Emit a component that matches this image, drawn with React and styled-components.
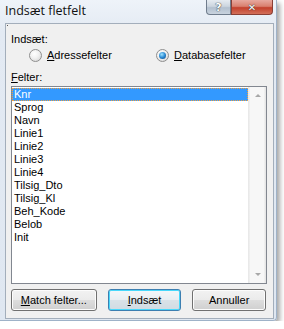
import React from 'react';
import styled, { createGlobalStyle } from 'styled-components';

/*--------------------------
    Global
--------------------------*/
const Global = createGlobalStyle`
    html, body {
        margin: 0;
        padding: 0;
        background: #ffffff;
    }
    body {
        font-family: "Liberation Sans", Arial, sans-serif;
        font-size: 11px;
        color: #000;
    }
`;

/*--------------------------
    Data
--------------------------*/
const FIELDS = [
    'Knr', 'Sprog', 'Navn', 'Linie1', 'Linie2', 'Linie3', 'Linie4',
    'Tilsig_Dto', 'Tilsig_Kl', 'Beh_Kode', 'Belob', 'Init',
];

/*--------------------------
    Styled
--------------------------*/
const Window = styled.div`
    width: 277px;
    height: 321px;
    box-sizing: border-box;
    display: flex;
    flex-direction: column;
    background: linear-gradient(180deg, #eef3f9 0%, #e3eaf3 10%, #dfe7f1 100%);
    border: 1px solid #9fb2c8;
    border-top: none;
    border-left: none;
    border-radius: 0 0 4px 0;
    box-shadow: 3px 3px 5px rgba(0, 0, 0, 0.35);
`;

const TitleBar = styled.div`
    display: flex;
    height: 23px;
    flex-shrink: 0;
    padding-left: 5px;
    align-items: flex-start;
`;

const Title = styled.div`
    font-family: "Open Sans", "Noto Sans", sans-serif;
    font-size: 12.5px;
    line-height: 22px;
    color: #111;
`;

const CaptionButtons = styled.div`
    display: flex;
    margin-left: auto;
    margin-right: 3px;
`;

const CaptionBtn = styled.div`
    display: flex;
    width: ${props => props.w}px;
    height: 15px;
    box-sizing: border-box;
    align-items: center;
    justify-content: center;
    border: 1px solid ${props => props.close ? '#8a3f35' : '#6f7c8c'};
    border-top: none;
    border-radius: ${props => props.close ? '0 0 4px 0' : '0 0 0 4px'};
    background: ${props => props.close
        ? 'linear-gradient(180deg, #e7a99f 0%, #d9806f 45%, #c3402c 55%, #d2705a 100%)'
        : 'linear-gradient(180deg, #e6ebf1 0%, #ccd5df 45%, #b3c0cf 55%, #c9d3de 100%)'};
    color: #fff;
    font-family: "DejaVu Sans", sans-serif;
    font-weight: bold;
    font-size: ${props => props.close ? 10 : 11}px;
    text-shadow: 0 0 1px #333, 0 0 1px #333;
`;

const Client = styled.div`
    display: flex;
    flex-direction: column;
    margin: 0 2px 4px 5px;
    padding: 9px 7px 7px 5px;
    flex: 1;
    background: #f0f0f0;
    border: 1px solid #a3aebb;
    position: relative;
`;

const FocusDot = styled.div`
    position: absolute;
    top: 1px;
    left: 1px;
    width: 1px;
    height: 1px;
    background: #555;
`;

const Label = styled.div`
    line-height: 13px;
    height: 13px;
    margin-top: ${props => props.mt || 0}px;
`;

const Key = styled.span`
    text-decoration: underline;
    text-underline-offset: 1px;
`;

const RadioRow = styled.div`
    display: grid;
    grid-template-columns: 127px auto;
    padding-left: 18px;
    margin-top: 3px;
    height: 13px;
`;

const RadioItem = styled.div`
    display: flex;
    align-items: center;
    gap: 5px;
    line-height: 13px;
`;

const RadioCircle = styled.div`
    width: 13px;
    height: 13px;
    box-sizing: border-box;
    border-radius: 50%;
    border: 1px solid #8f8f8f;
    background: radial-gradient(circle at 40% 35%, #ffffff 0%, #f0f0f0 45%, #cfcfcf 100%);
    display: flex;
    align-items: center;
    justify-content: center;
    &::after {
        content: '';
        display: ${props => props.checked ? 'block' : 'none'};
        width: 7px;
        height: 7px;
        border-radius: 50%;
        background: radial-gradient(circle at 40% 35%, #9fe3ff 0%, #2a8ad4 50%, #0a3e7a 100%);
    }
`;

const ListBox = styled.div`
    display: flex;
    margin-top: 2px;
    width: 256px;
    height: 198px;
    box-sizing: border-box;
    border: 1px solid #828790;
    background: #fff;
`;

const ListItems = styled.div`
    flex: 1;
    padding-top: 1px;
`;

const ListItem = styled.div`
    height: 13px;
    line-height: 13px;
    padding-left: 2px;
    box-sizing: border-box;
    background: ${props => props.selected ? '#3399ff' : 'transparent'};
    color: ${props => props.selected ? '#fff' : '#000'};
    outline: ${props => props.selected ? '1px dotted #f0a040' : 'none'};
    outline-offset: -1px;
`;

const ScrollBar = styled.div`
    display: flex;
    flex-direction: column;
    width: 17px;
    background: linear-gradient(90deg, #e6e6e6 0px, #f7f7f7 1px, #f7f7f7 15px, #e6e6e6 16px);
    border-left: 1px solid #e9e9e9;
    justify-content: space-between;
`;

const ScrollArrow = styled.div`
    display: flex;
    height: 17px;
    align-items: center;
    justify-content: center;
    &::after {
        content: '';
        width: 0;
        height: 0;
        border-left: 3px solid transparent;
        border-right: 3px solid transparent;
        ${props => props.down
            ? 'border-top: 3px solid #a8a8a8;'
            : 'border-bottom: 3px solid #a8a8a8;'}
    }
`;

const ButtonRow = styled.div`
    display: flex;
    margin-top: 5px;
    gap: 11px;
`;

const Button = styled.div`
    display: flex;
    width: ${props => props.w}px;
    height: 22px;
    box-sizing: border-box;
    align-items: center;
    justify-content: center;
    border: 1px solid ${props => props.primary ? '#3c7fb1' : '#707070'};
    border-radius: 3px;
    background: ${props => props.primary
        ? 'linear-gradient(180deg, #f4f7f9 0%, #e8eef2 48%, #d9e2e8 52%, #d0dbe2 100%)'
        : 'linear-gradient(180deg, #f2f2f2 0%, #ebebeb 48%, #dddddd 52%, #cfcfcf 100%)'};
    box-shadow: inset 0 0 0 1px ${props => props.primary ? '#48d8fb' : '#fcfcfc'};
    line-height: 13px;
`;

/*--------------------------
    Main Component
--------------------------*/
export default function App() {

    return (
        <>
            <Global />
            <Window>
                <TitleBar>
                    <Title>Indsæt fletfelt</Title>
                    <CaptionButtons>
                        <CaptionBtn w={25}>?</CaptionBtn>
                        <CaptionBtn w={42} close>✕</CaptionBtn>
                    </CaptionButtons>
                </TitleBar>
                <Client>
                    <FocusDot />
                    <Label>Indsæt:</Label>
                    <RadioRow>
                        <RadioItem>
                            <RadioCircle />
                            <span><Key>A</Key>dressefelter</span>
                        </RadioItem>
                        <RadioItem>
                            <RadioCircle checked />
                            <span><Key>D</Key>atabasefelter</span>
                        </RadioItem>
                    </RadioRow>
                    <Label mt={9}><Key>F</Key>elter:</Label>
                    <ListBox>
                        <ListItems>
                            {FIELDS.map((name, i) => (
                                <ListItem key={name} selected={i === 0}>{name}</ListItem>
                            ))}
                        </ListItems>
                        <ScrollBar>
                            <ScrollArrow />
                            <ScrollArrow down />
                        </ScrollBar>
                    </ListBox>
                    <ButtonRow>
                        <Button w={86}><span><Key>M</Key>atch felter...</span></Button>
                        <Button w={74} primary><span><Key>I</Key>ndsæt</span></Button>
                        <Button w={74}>Annuller</Button>
                    </ButtonRow>
                </Client>
            </Window>
        </>
    );
}
